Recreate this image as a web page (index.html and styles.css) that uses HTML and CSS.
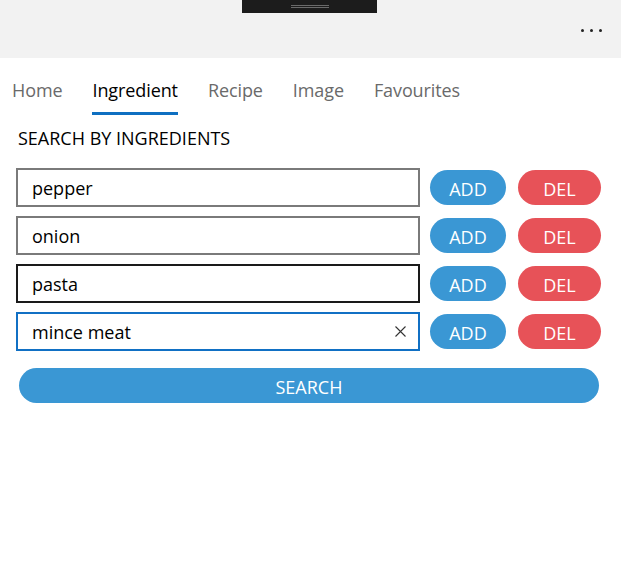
FILE: index.html
```html
<!DOCTYPE html>
<html lang="en">
<head>
<meta charset="utf-8">
<title>Search by ingredients</title>
<link rel="stylesheet" href="styles.css">
</head>
<body>
<header class="titlebar">
  <div class="grip"><span class="grip-line"></span></div>
  <div class="more" aria-label="More"><span class="dot"></span><span class="dot"></span><span class="dot"></span></div>
</header>
<nav class="tabs">
  <span class="tab">Home</span>
  <span class="tab active">Ingredient</span>
  <span class="tab">Recipe</span>
  <span class="tab">Image</span>
  <span class="tab">Favourites</span>
</nav>
<main class="content">
  <h1 class="heading">SEARCH BY INGREDIENTS</h1>
  <div class="rows">
    <div class="row">
      <div class="field"><input class="field-input" type="text" value="pepper"></div>
      <button class="btn btn-add">ADD</button>
      <button class="btn btn-del">DEL</button>
    </div>
    <div class="row">
      <div class="field"><input class="field-input" type="text" value="onion"></div>
      <button class="btn btn-add">ADD</button>
      <button class="btn btn-del">DEL</button>
    </div>
    <div class="row">
      <div class="field field-hover"><input class="field-input" type="text" value="pasta"></div>
      <button class="btn btn-add">ADD</button>
      <button class="btn btn-del">DEL</button>
    </div>
    <div class="row">
      <div class="field field-focus"><input class="field-input" type="text" value="mince meat">
        <svg class="clear" width="11" height="11" viewBox="0 0 11 11" aria-hidden="true"><path d="M0.5 0.5 L10.5 10.5 M10.5 0.5 L0.5 10.5" stroke="#333" stroke-width="1.1" fill="none"/></svg>
      </div>
      <button class="btn btn-add">ADD</button>
      <button class="btn btn-del">DEL</button>
    </div>
  </div>
  <button class="btn btn-search">SEARCH</button>
</main>
</body>
</html>
```
FILE: styles.css
```css
* { box-sizing: border-box; }
html, body { margin: 0; padding: 0; background: #fff; }
body {
  width: 621px;
  font-family: "Open Sans", "Noto Sans", sans-serif;
  font-size: 18px;
  color: #000;
}
.titlebar {
  height: 58px;
  background: #f2f2f2;
  display: flex;
  flex-direction: column;
}
.grip {
  width: 135px;
  height: 13px;
  margin: 0 0 0 242px;
  background: #1c1c1c;
  display: flex;
  justify-content: center;
  padding-top: 5px;
}
.grip-line {
  display: block;
  width: 38px;
  height: 3px;
  border-top: 1px solid #6a6a6a;
  border-bottom: 1px solid #6a6a6a;
}
.more {
  display: flex;
  justify-content: flex-end;
  gap: 6px;
  padding-right: 19px;
  margin-top: 16px;
}
.dot {
  width: 3px;
  height: 3px;
  border-radius: 50%;
  background: #222;
}
.tabs {
  display: flex;
  gap: 30px;
  padding-left: 12px;
  margin-top: 20px;
}
.tab {
  font-size: 18px;
  letter-spacing: -0.1px;
  line-height: 24px;
  padding-bottom: 10px;
  border-bottom: 3px solid transparent;
  color: #6a6a6a;
}
.tab.active {
  color: #000;
  border-bottom-color: #0e6fc1;
}
.content {
  padding-left: 16px;
}
.heading {
  margin: 11px 0 0 2px;
  font-size: 18px;
  font-weight: 400;
  line-height: 24px;
}
.rows {
  margin-top: 18px;
  display: flex;
  flex-direction: column;
  gap: 9px;
}
.row {
  display: flex;
  align-items: center;
  height: 39px;
}
.field {
  width: 404px;
  height: 39px;
  border: 2px solid #7a7a7a;
  display: flex;
  align-items: center;
  padding: 0 12px 0 14px;
  background: #fff;
}
.field-hover { border-color: #1a1a1a; }
.field-focus { border-color: #1170c4; }
.field-input {
  flex: 1;
  min-width: 0;
  border: 0;
  outline: none;
  padding: 0;
  margin: 0;
  background: transparent;
  font: inherit;
  line-height: 24px;
  color: #000;
}
.clear { flex: none; display: block; }
.btn {
  border: 0;
  margin: 0;
  padding: 3px 0 0;
  font: inherit;
  color: #fff;
  height: 35px;
  line-height: 32px;
  border-radius: 18px;
  text-align: center;
}
.btn-add {
  width: 76px;
  margin-left: 10px;
  background: #3a97d4;
}
.btn-del {
  width: 83px;
  margin-left: 12px;
  background: #e75258;
}
.btn-search {
  display: block;
  width: 580px;
  margin: 17px 0 0 3px;
  background: #3a97d4;
}
```
